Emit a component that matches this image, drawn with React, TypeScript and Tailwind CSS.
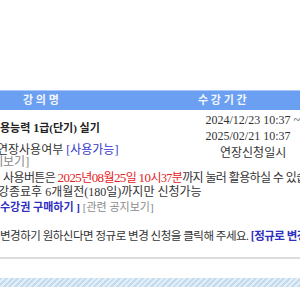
import React from "react";

export default function App() {
  return (
    <div className="w-[300px] h-[300px] overflow-hidden bg-white font-['Liberation_Serif','Noto_Sans_CJK_KR',serif] text-[#333] text-[12px]">
      <div className="h-[90px]" />
      <div className="h-[20px] flex border-t border-[#a9c8f7] bg-[#6b9ff1] text-[#f3f6ff] text-[11px] font-bold">
        <div className="w-[198px] pl-[23px] leading-[19px] whitespace-nowrap">강 의 명</div>
        <div className="leading-[19px] whitespace-nowrap">수 강 기 간</div>
      </div>

      <div className="flex pt-[2px]">
        <div className="w-[198px] h-[32px] flex items-center font-bold text-[11px] text-[#222] whitespace-nowrap">
          용능력&nbsp;<span className="text-[12px]">1</span>급(단기) 실기
        </div>
        <div className="pl-[10px] text-[12px] whitespace-nowrap">
          <div className="h-[16px] leading-[16px]">2024/12/23 10:37 ~</div>
          <div className="h-[16px] leading-[16px]">2025/02/21 10:37</div>
        </div>
      </div>

      <div className="flex">
        <div className="w-[198px] whitespace-nowrap">
          <div className="h-[12px] leading-[12px] ml-[-3px]">
            연장사용여부 <span className="text-[#3434c8]">[사용가능]</span>
          </div>
          <div className="h-[12px] leading-[12px] text-[#888] ml-[-23px]">[상세보기]</div>
        </div>
        <div className="pl-[22px] h-[18px] leading-[18px] whitespace-nowrap">연장신청일시</div>
      </div>

      <div className="mt-[2px] whitespace-nowrap">
        <div className="h-[15px] leading-[15px] pl-[3px] tracking-[-0.6px]">
          사용버튼은{" "}
          <span className="text-[#e3211d]">
            <span className="text-[13px]">2025</span>년<span className="text-[13px]">08</span>월<span className="text-[13px]">25</span>일{" "}
            <span className="text-[13px]">10</span>시<span className="text-[12px]">37</span>분
          </span>
          까지 눌러 활용하실 수 있습니다.
        </div>
        <div className="h-[15px] leading-[15px] ml-[-2px]">
          강종료후 6개월전(180일)까지만 신청가능
        </div>
        <div className="h-[15px] leading-[15px] text-[11px]">
          <span className="font-bold text-[#2f2fc0]">수강권 구매하기 ]</span>{" "}
          <span className="text-[#8a8a8a]">[관련 공지보기]</span>
        </div>
      </div>

      <div className="mt-[13px] h-[16px] leading-[16px] whitespace-nowrap text-[11.5px] tracking-[-0.5px]">
        변경하기 원하신다면 정규로 변경 신청을 클릭해 주세요.{" "}
        <span className="font-bold text-[#2f2fc0]">[정규로 변경 신청]</span>
      </div>

      <div className="mt-[13px] h-[2px] bg-[#dcdcdc]" />
      <div className="mt-[19px] h-[9px] bg-[repeating-linear-gradient(135deg,#c4dbee_0px,#c4dbee_2px,#e2eef8_2px,#e2eef8_4px)]" />
    </div>
  );
}
